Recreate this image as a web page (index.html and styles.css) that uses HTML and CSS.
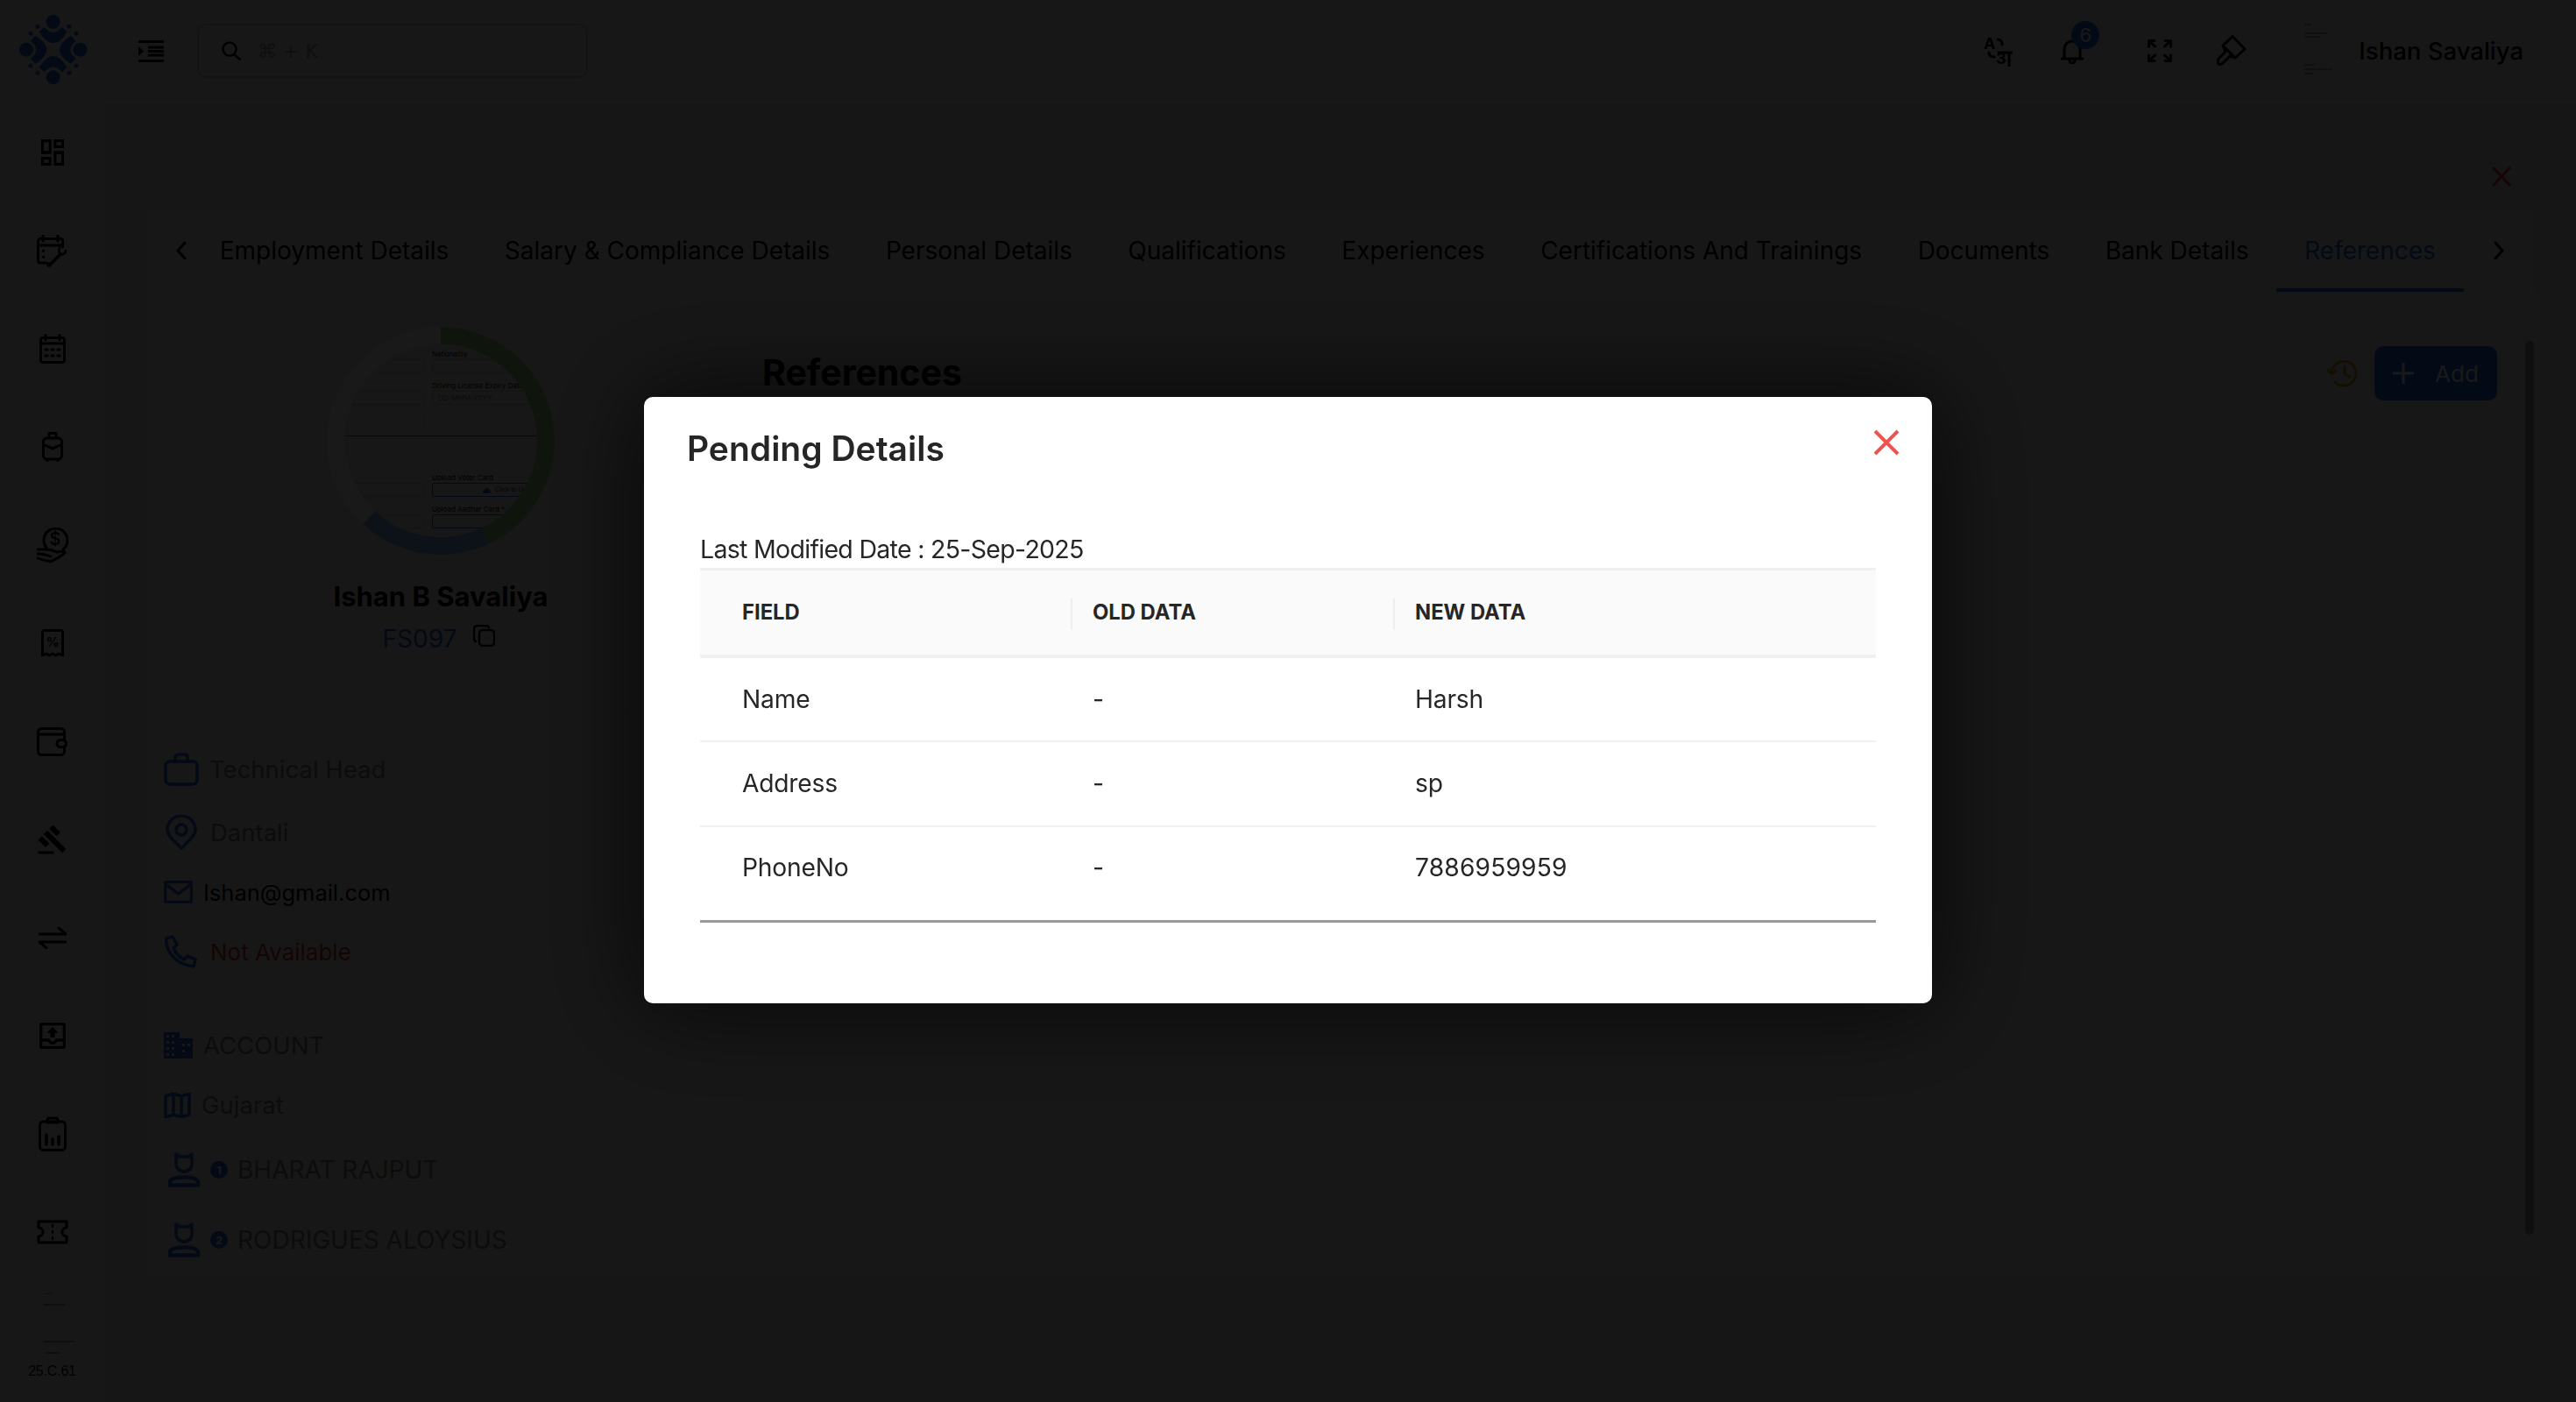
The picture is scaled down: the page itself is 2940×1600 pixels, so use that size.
FILE: index.html
```html
<!DOCTYPE html>
<html lang="en">
<head>
    <meta charset="UTF-8">
    <title>References</title>
    <link rel="stylesheet" href="styles.css">
</head>
<body>
<div class="app">
    <aside class="sidebar">
        <div class="logo">
            <svg width="100" height="100" viewBox="0 0 300 300" fill="#1f5fd0">
                <circle cx="152" cy="48" r="24"/><circle cx="152" cy="238" r="24"/>
                <circle cx="60" cy="143" r="24"/><circle cx="245" cy="143" r="24"/>
                <circle cx="99" cy="64" r="7.500"/><circle cx="207" cy="64" r="7.500"/>
                <circle cx="75" cy="88" r="7.500"/><circle cx="231" cy="88" r="7.500"/>
                <circle cx="75" cy="198" r="7.500"/><circle cx="231" cy="198" r="7.500"/>
                <circle cx="99" cy="223" r="7.500"/><circle cx="207" cy="223" r="7.500"/>
                <path d="M104 82 L122 66 Q152 102 182 66 L200 82 Q152 160 104 82 Z"/>
                <path transform="rotate(90 152 143)" d="M104 82 L122 66 Q152 102 182 66 L200 82 Q152 160 104 82 Z"/>
                <path transform="rotate(180 152 143)" d="M104 82 L122 66 Q152 102 182 66 L200 82 Q152 160 104 82 Z"/>
                <path transform="rotate(270 152 143)" d="M104 82 L122 66 Q152 102 182 66 L200 82 Q152 160 104 82 Z"/>
            </svg>
        </div>
        <nav class="side-nav">
            <a class="side-item"><svg width="26" height="30" viewBox="3 3 18 18" preserveAspectRatio="none" fill="#000"><path d="M19 5v2h-4V5h4M9 5v6H5V5h4m10 8v6h-4v-6h4M9 17v2H5v-2h4M21 3h-8v6h8V3zM11 3H3v10h8V3zm10 8h-8v10h8V11zm-10 4H3v6h8v-6z"/></svg></a>
            <a class="side-item"><svg class="line" width="35" height="37" viewBox="0 0 35 37"><path d="M11 32H4a2.500 2.500 0 0 1-2.500-2.500V7A2.500 2.500 0 0 1 4 4.500h23A2.500 2.500 0 0 1 29.500 7v7M1.500 12h28M7 1v6M24 1v6"/><path stroke-width="3" d="M7.500 18v.5M7.500 25v.5"/><path stroke-width="3.600" d="M16 33L27 22"/><path stroke-width="2.600" d="M26 15q-2 5 2 7 4 1 5-4"/><circle cx="14" cy="34" r="1.800" stroke-width="2"/></svg></a>
            <a class="side-item"><svg class="line" width="30" height="34" viewBox="0 0 30 34"><rect x="1.500" y="4.500" width="27" height="28" rx="2.500"/><path d="M1.500 11h27M7 1v6M23 1v6"/><path stroke-width="3.200" d="M7 18h2M14 18h2M21 18h2M7 25h2M14 25h2M21 25h2"/></svg></a>
            <a class="side-item"><svg class="line" width="24" height="34" viewBox="0 0 24 34"><rect x="1.500" y="7" width="21" height="24" rx="4"/><path d="M8 7V1.500h8V7M1.500 15q3 0 10.500 4 7-4 10.500-4M6 31v2M18 31v2"/></svg></a>
            <a class="side-item"><svg class="line" width="36" height="41" viewBox="0 0 36 41"><path d="M11 23A13.500 13.500 0 1 1 30 25"/><text class="dollar" x="21" y="20" text-anchor="middle">$</text><path stroke-width="2.800" d="M1 25h9q8 0 12 3l9-1q2 1 0 3-7 5-15 9-7-1-15-4M1 30q8 0 15 3"/></svg></a>
            <a class="side-item"><svg class="line" width="26" height="32" viewBox="0 0 26 32"><path d="M4 1.500h18a2.500 2.500 0 0 1 2.500 2.500v26l-4.500-2-3.500 2-3.500-2-3.500 2-3.500-2-4.500 2V4A2.500 2.500 0 0 1 4 1.500z"/><text class="percent" x="13" y="20" text-anchor="middle">%</text></svg></a>
            <a class="side-item"><svg class="line" width="35" height="33" viewBox="0 0 35 33"><rect x="1.500" y="1.500" width="30" height="30" rx="4"/><path d="M2 8h29"/><rect class="clasp" x="23" y="14.500" width="10.500" height="8" rx="4"/></svg></a>
            <a class="side-item"><svg width="36" height="36" viewBox="0 0 24 24" fill="#000"><path d="M1 21h12v2H1v-2zM5.245 8.070l2.830-2.827 14.140 14.142-2.828 2.828L5.245 8.070zM12.317 1l5.657 5.656-2.830 2.830-5.654-5.660L12.317 1zM3.825 9.485l5.657 5.657-2.828 2.828-5.657-5.657 2.828-2.828z"/></svg></a>
            <a class="side-item"><svg class="line" width="32" height="26" viewBox="0 0 32 26"><path d="M1 9h30l-8-7M31 18H1l8 7"/></svg></a>
            <a class="side-item"><svg width="30" height="30" viewBox="3 3 18 18" fill="#000"><path d="M19 3H5a2 2 0 0 0-2 2v14a2 2 0 0 0 2 2h14a2 2 0 0 0 2-2V5a2 2 0 0 0-2-2zm0 16H5v-3h3.560a4 4 0 0 0 6.880 0H19v3zm0-5h-4.990c0 1.100-.9 2-2.010 2s-2-.9-2-2H5V5h14v9zM8 10h2.500v3h3v-3H16l-4-4z"/></svg></a>
            <a class="side-item"><svg class="line" width="32" height="40" viewBox="0 0 32 40"><rect x="1.500" y="6" width="29" height="32.500" rx="4"/><path d="M10 6V4a2 2 0 0 1 2-2h8a2 2 0 0 1 2 2v3H10z"/><path stroke-width="3.500" d="M9 32V21M16 32v-6M23 32v-9"/></svg></a>
            <a class="side-item"><svg class="line" width="36" height="28" viewBox="0 0 36 28"><path d="M2 2h32v7a5 5 0 0 0 0 10v7H2v-7a5 5 0 0 0 0-10z"/><path stroke-width="2.500" d="M18 6v2M18 13v2M18 20v2"/></svg></a>
        </nav>
        <div class="side-footer">
            <svg class="tiny-marks" width="36" height="72" viewBox="0 0 36 72"><path d="M1 0h10M1 13h24M1 55h36M1 68h20"/></svg>
            <span class="version">25.C.61</span>
        </div>
    </aside>

    <div class="main">
        <header class="topbar">
            <div class="topbar-left">
                <svg width="29" height="25" viewBox="0 0 29 25" fill="#000"><path d="M0 0h29v3H0zM0 22h29v3H0zM11 6.500h18v3H11zM11 11h18v3H11zM11 15.500h18v3H11zM0 7l6 5.500L0 18z"/></svg>
                <div class="search">
                    <svg class="line-thin" width="23" height="22" viewBox="0 0 23 22"><circle cx="9" cy="9" r="7.500"/><path d="M14 15l7 6"/></svg>
                    <span>⌘ + K</span>
                </div>
            </div>
            <div class="topbar-right">
                <svg class="line icon-lang" width="34" height="36" viewBox="0 0 34 36"><text class="lang-a" x="1" y="16">A</text><path d="M17 5q5 0 5 6M7 20q0 5 6 5"/><text class="lang-b" x="15" y="33">3</text><path d="M30 20v15M18 20h15"/></svg>
                <div class="bell">
                    <svg class="line" width="26" height="30" viewBox="0 0 26 30"><path d="M1 24h24M4 24V13a9 9 0 0 1 18 0v11M10 26a3 3 0 0 0 6 0"/></svg>
                    <span class="badge">6</span>
                </div>
                <svg class="line icon-full" width="28" height="26" viewBox="0 0 28 26"><path d="M8 1.500H1.500V8M1.500 1.500l7 6.500M20 1.500h6.500V8M26.500 1.500l-7 6.500M8 24.500H1.500V18M1.500 24.500l7-6.500M20 24.500h6.500V18M26.500 24.500l-7-6.500"/></svg>
                <svg class="line icon-brush" width="34" height="36" viewBox="0 0 34 36"><path d="M18 1.500L32 16 21 26l-6-2-8 8q-4 3-5.500 0-1.500-3 1.500-6l7-7-3-7zM7 12l14 14"/></svg>
                <div class="user">
                    <div class="user-pic">
                        <svg class="tiny-marks" width="36" height="64" viewBox="0 0 36 64"><path d="M2 2h8M2 12h26M2 16h18M2 48h12M2 53h32M2 58h10"/></svg>
                    </div>
                    <span class="user-name">Ishan Savaliya</span>
                </div>
            </div>
        </header>

        <div class="content">
            <div class="page-close">
                <svg width="24" height="23" viewBox="0 0 24 23"><path d="M2 1l20 21M22 1L2 22"/></svg>
            </div>

            <div class="tabs">
                <svg class="line chev" width="13" height="22" viewBox="0 0 13 22"><path d="M11 2L3 11l8 9"/></svg>
                <a class="tab">Employment Details</a>
                <a class="tab">Salary &amp; Compliance Details</a>
                <a class="tab">Personal Details</a>
                <a class="tab">Qualifications</a>
                <a class="tab">Experiences</a>
                <a class="tab">Certifications And Trainings</a>
                <a class="tab">Documents</a>
                <a class="tab">Bank Details</a>
                <a class="tab active">References</a>
                <svg class="line chev chev-next" width="13" height="22" viewBox="0 0 13 22"><path d="M2 2l8 9-8 9"/></svg>
            </div>

            <div class="columns">
                <section class="profile">
                    <div class="avatar-ring">
                        <div class="avatar">
                            <div class="mini-form">
                                <div class="mini-col">
                                    <span class="mini-label"></span>
                                    <div class="mini-field"></div>
                                    <span class="mini-label"></span>
                                    <div class="mini-field"></div>
                                    <div class="mini-stub"></div>
                                </div>
                                <div class="mini-col">
                                    <span class="mini-label">Nationality</span>
                                    <div class="mini-field"></div>
                                    <span class="mini-label">Driving License Expiry Date</span>
                                    <div class="mini-field mini-hint">DD-MMM-YYYY</div>
                                </div>
                            </div>
                            <div class="mini-rule"></div>
                            <div class="mini-form">
                                <div class="mini-col">
                                    <span class="mini-label"></span>
                                    <div class="mini-field"></div>
                                    <span class="mini-label"></span>
                                    <div class="mini-field"></div>
                                </div>
                                <div class="mini-col">
                                    <span class="mini-label">Upload Voter Card</span>
                                    <div class="mini-field mini-upload">
                                        <svg width="9" height="7" viewBox="0 0 9 7" fill="#1f5fd0"><path d="M2 7a2 2 0 0 1-.3-4A3 3 0 0 1 7 2.500 2.300 2.300 0 0 1 7 7z"/></svg>
                                        <span>Click to Upload</span>
                                    </div>
                                    <span class="mini-label">Upload Aadhar Card <b>*</b></span>
                                    <div class="mini-field mini-upload"></div>
                                </div>
                            </div>
                        </div>
                    </div>
                    <h2 class="emp-name">Ishan B Savaliya</h2>
                    <div class="emp-code">
                        <span>FS097</span>
                        <svg class="line-thin" width="25" height="25" viewBox="0 0 25 25"><rect x="7" y="6" width="17" height="18" rx="4"/><path d="M3 19q-2-.5-2-3V5q0-4 4-4h10q2 0 3 2"/></svg>
                    </div>

                    <div class="info-block first">
                        <div class="info-row row-role">
                            <svg class="blue-line" width="40" height="38" viewBox="0 0 40 38"><rect x="2" y="10" width="36" height="26" rx="5"/><path d="M13 10V6q0-4 4-4h6q4 0 4 4v4"/></svg>
                            <span class="muted">Technical Head</span>
                        </div>
                        <div class="info-row row-pin">
                            <svg class="blue-line" width="36" height="40" viewBox="0 0 36 40"><path d="M18 38C8 28 2 23 2 17a16 16 0 0 1 32 0c0 6-6 11-16 21z"/><circle cx="18" cy="17" r="6"/></svg>
                            <span class="muted">Dantali</span>
                        </div>
                        <div class="info-row">
                            <svg class="blue-line" width="33" height="26" viewBox="0 0 33 26"><rect x="1.500" y="1.500" width="30" height="23" rx="2"/><path d="M2 4l14.500 11L31 4"/></svg>
                            <span class="email">Ishan@gmail.com</span>
                        </div>
                        <div class="info-row row-phone">
                            <svg class="blue-line" width="38" height="38" viewBox="0 0 38 38"><path d="M10 2L3 4C1 12 8 33 34 36l2-8-9-4-4 4C17 25 13 20 11 15l4-4z"/></svg>
                            <span class="not-available">Not Available</span>
                        </div>
                    </div>

                    <div class="info-block">
                        <div class="info-row">
                            <svg width="33" height="30" viewBox="0 0 33 30" fill="#1f5fd0"><path d="M0 0h18v7h15v23H0zM3 3v3h3V3zm6 0v3h3V3zM3 10v3h3v-3zm6 0v3h3v-3zM3 17v3h3v-3zm6 0v3h3v-3zM3 24v3h3v-3zm6 0v3h3v-3zM21 13v3h3v-3zm0 7v3h3v-3zM27 13v3h3v-3z" fill-rule="evenodd"/></svg>
                            <span class="muted">ACCOUNT</span>
                        </div>
                        <div class="info-row row-state">
                            <svg class="blue-line" width="31" height="29" viewBox="0 0 31 29"><path d="M2 4l9-3 9 3 9-3v24l-9 3-9-3-9 3zM11 1v24M20 4v24"/></svg>
                            <span class="muted">Gujarat</span>
                        </div>
                        <div class="info-row manager">
                            <svg width="38" height="40" viewBox="0 0 38 40" class="blue-line"><path d="M10 2l4 3h10l4-3v11a9 9 0 0 1-18 0z"/><path stroke-width="4.500" d="M3 37.500v-3q0-6 16-6t16 6v3z"/></svg>
                            <span class="num">1</span>
                            <span class="muted">BHARAT RAJPUT</span>
                        </div>
                        <div class="info-row manager">
                            <svg width="38" height="40" viewBox="0 0 38 40" class="blue-line"><path d="M10 2l4 3h10l4-3v11a9 9 0 0 1-18 0z"/><path stroke-width="4.500" d="M3 37.500v-3q0-6 16-6t16 6v3z"/></svg>
                            <span class="num">2</span>
                            <span class="muted">RODRIGUES ALOYSIUS</span>
                        </div>
                    </div>
                </section>

                <section class="refs">
                    <h2>References</h2>
                    <div class="refs-actions">
                        <svg class="history" width="36" height="32" viewBox="0 0 36 32"><path d="M5 16a14 14 0 1 1 4 10"/><path d="M1 12l4 5 5-4M20 8v9l6 3"/></svg>
                        <button class="add-btn"><svg width="24" height="24" viewBox="0 0 24 24"><path d="M12 0v24M0 12h24"/></svg>Add</button>
                    </div>
                </section>
                <div class="scroll-thumb"></div>
            </div>
        </div>
    </div>
</div>

<div class="overlay">
    <div class="modal">
        <h3 class="modal-title">Pending Details</h3>
        <svg class="modal-close" width="30" height="30" viewBox="0 0 30 30"><path d="M2 2l26 26M28 2L2 28"/></svg>
        <p class="modified">Last Modified Date : 25-Sep-2025</p>
        <div class="table-wrap">
            <table>
                <thead>
                    <tr><th class="col-field">Field</th><th class="col-old">Old Data</th><th>New Data</th></tr>
                </thead>
                <tbody>
                    <tr><td>Name</td><td>-</td><td>Harsh</td></tr>
                    <tr><td>Address</td><td>-</td><td>sp</td></tr>
                    <tr><td>PhoneNo</td><td>-</td><td class="digits">7886959959</td></tr>
                </tbody>
            </table>
        </div>
    </div>
</div>
</body>
</html>
```
FILE: styles.css
```css
* { box-sizing: border-box; }
html, body { margin: 0; height: 100%; overflow: hidden; }
body { background: #dcdcdc; font-family: "Inter", "Noto Sans", sans-serif; color: #000; }
h2, h3, p { margin: 0; }
svg { display: block; flex: none; }
.line { fill: none; stroke: #000; stroke-width: 3; stroke-linecap: round; stroke-linejoin: round; }
.line-thin { fill: none; stroke: #000; stroke-width: 2.4; stroke-linecap: round; stroke-linejoin: round; }
.blue-line { fill: none; stroke: #1f5fd0; stroke-width: 3.600; stroke-linecap: round; stroke-linejoin: round; }
.line text { stroke: none; fill: #000; }
.clasp { fill: #e6e6e6; }
.dollar { font-size: 20px; font-weight: 500; }
.percent { font-size: 15px; font-weight: 700; }
.lang-a { font-size: 18px; font-weight: 700; }
.lang-b { font-size: 18px; font-weight: 700; }

.app { display: flex; height: 1600px; }

/* sidebar */
.sidebar { width: 120px; flex: none; display: flex; flex-direction: column; background: #e6e6e6; border-right: 1px solid #f2f2f2; }
.logo { height: 118px; display: flex; align-items: center; justify-content: center; }
.side-nav { height: 1332px; overflow: hidden; border-bottom: 2px solid #f2f2f2; }
.side-item { height: 112px; display: flex; align-items: center; justify-content: center; }
.side-footer { flex: 1; display: flex; flex-direction: column; align-items: center; padding-top: 26px; }
.tiny-marks { fill: none; stroke: #555; stroke-width: 1; margin-left: 14px; }
.version { font-family: "Liberation Sans", sans-serif; font-size: 16px; margin-top: 8px; color: #111; letter-spacing: -0.2px; }

/* top bar */
.main { flex: 1; min-width: 0; display: flex; flex-direction: column; }
.topbar { height: 118px; flex: none; display: flex; align-items: center; justify-content: space-between; padding: 0 60px 0 38px; background: #e6e6e6; border-bottom: 2px solid #f2f2f2; }
.topbar-left { display: flex; align-items: center; gap: 38px; }
.search { width: 446px; height: 62px; border: 2px solid #c4c4c4; border-radius: 10px; display: flex; align-items: center; gap: 18px; padding: 0 26px; color: #999; font-size: 24px; }
.search span { font-family: "DejaVu Sans", sans-serif; font-size: 22px; }
.topbar-right { display: flex; align-items: center; }
.icon-lang { margin-right: 55px; }
.bell { position: relative; margin-right: 73px; }
.badge { position: absolute; left: 12px; top: -19px; width: 32px; height: 32px; border-radius: 50%; background: #1f5fd0; color: #fff; font-size: 22px; display: flex; align-items: center; justify-content: center; }
.icon-brush { margin-left: 51px; margin-right: 43px; }
.user { display: flex; align-items: center; gap: 21px; }
.user-pic { width: 64px; height: 64px; border-radius: 50%; background: #ececec; display: flex; justify-content: center; }
.user-name { font-size: 27.5px; font-weight: 500; }

/* page body */
.content { flex: 1; position: relative; padding: 120px 48px 0 48px; }
.page-close { position: absolute; right: 73px; top: 72px; }
.page-close svg { fill: none; stroke: #e53935; stroke-width: 3; }
.tabs { height: 95px; display: flex; align-items: center; background: #ebebeb; padding-left: 32px; box-shadow: 0 1px 3px rgba(0,0,0,.08); }
.chev { margin-right: 6px; }
.tab { height: 100%; display: flex; align-items: center; padding: 0 31.75px; font-size: 28px; white-space: nowrap; }
.tab.active { color: #1f5fd0; box-shadow: inset 0 -4px 0 #1f5fd0; }
.chev-next { margin-left: 34px; }
.columns { display: flex; position: relative; height: 1125px; }

.profile { width: 640px; flex: none; background: #ebebeb; padding-top: 40px; }
.avatar-ring { width: 260px; height: 260px; border-radius: 50%; padding: 20px; margin-left: 205px; background: conic-gradient(#9cd878 0 155deg, #78b8f0 155deg 223deg, #fff 223deg 360deg); }
.avatar { width: 220px; height: 220px; border-radius: 50%; background: #ebebeb; overflow: hidden; padding-top: 6px; }
.mini-form { display: grid; grid-template-columns: 91px 120px; gap: 9px; }
.mini-col { min-width: 0; }
.mini-label { display: block; height: 10px; font-size: 8px; line-height: 10px; white-space: nowrap; color: #000; }
.mini-label b { color: #c00; }
.mini-field { height: 16px; border: 1px solid #c4c4c4; border-radius: 2px; margin: 1px 0 9px; font-size: 8px; line-height: 14px; padding-left: 6px; color: #777; }
.mini-upload { border-color: #1f5fd0; padding-left: 57px; color: #333; display: flex; align-items: center; gap: 5px; font-size: 7px; white-space: nowrap; }
.mini-stub { height: 14px; margin-top: 11px; border-right: 1px solid #c4c4c4; }
.mini-rule { height: 1px; background: #666; margin: 10px 0 42px; }

.emp-name { font-size: 31px; font-weight: 700; text-align: center; margin-top: 28px; width: 670px; line-height: 40px; }
.emp-code { display: flex; justify-content: center; align-items: center; gap: 19px; width: 666px; margin-top: 8px; color: #1f5fd0; font-size: 28px; line-height: 40px; }
.emp-code svg { margin-top: -8px; }
.info-block { border-top: 2px solid #e0e0e0; margin-left: 14px; width: 1000px; padding: 44px 0 17px; }
.info-block.first { margin-top: 59px; padding-top: 46px; }
.info-row { display: flex; align-items: center; gap: 12px; height: 44px; margin-bottom: 24px; padding-left: 5px; font-size: 27.5px; }
.row-role { margin-bottom: 28px; }
.row-pin { gap: 15px; padding-left: 7px; }
.row-phone { gap: 15px; margin-bottom: 0; }
.row-state { margin-bottom: 30px; }
.muted { color: #777; }
.email { font-size: 25.500px; color: #000; }
.not-available { font-size: 26px; color: #d32f2f; }
.manager { gap: 11px; margin-bottom: 36px; padding-left: 9px; font-size: 28px; }
.num { width: 20px; height: 20px; border-radius: 50%; background: #1f5fd0; color: #fff; font-size: 12px; font-weight: 700; display: flex; align-items: center; justify-content: center; }

.refs { flex: 1; background: #ebebeb; padding: 62px 0 0 62px; display: flex; justify-content: space-between; align-items: flex-start; }
.refs h2 { font-size: 41px; font-weight: 700; line-height: 60px; }
.refs-actions { display: flex; align-items: center; gap: 18px; margin-right: 50px; }
.history { fill: none; stroke: #c99a12; stroke-width: 3; stroke-linecap: round; stroke-linejoin: round; }
.add-btn { width: 140px; height: 62px; border: 0; border-radius: 10px; background: #1f5fd0; color: #fff; font: 26px "Inter", sans-serif; display: flex; align-items: center; justify-content: center; gap: 24px; }
.add-btn svg { fill: none; stroke: #fff; stroke-width: 3; }
.scroll-thumb { width: 10px; height: 1020px; margin-top: 56px; background: #999; border-radius: 5px; flex: none; margin-left: -18px; }

/* modal */
.overlay { position: fixed; inset: 0; background: rgba(0,0,0,.9); display: flex; align-items: center; justify-content: center; padding-bottom: 2px; }
.modal { position: relative; width: 1470px; height: 692px; background: #fff; border-radius: 10px; padding: 31px 64px 0 64px; box-shadow: 0 0 120px 20px rgba(0,0,0,.6); color: #262626; }
.modal-title { font-size: 39px; line-height: 56px; font-weight: 600; margin-left: -15px; }
.modal-close { position: absolute; right: 37px; top: 37px; fill: none; stroke: #ef5350; stroke-width: 4; }
.modified { font-size: 28.500px; line-height: 40px; margin-top: 67px; letter-spacing: -0.7px; }
.table-wrap { border-bottom: 3px solid #999; height: 405px; margin-top: 1px; }
table { width: 100%; border-collapse: collapse; table-layout: fixed; }
th { position: relative; height: 99px; background: #fafafa; border-top: 3px solid #f0f0f0; border-bottom: 4px solid #f0f0f0; font-size: 23.800px; font-weight: 700; text-transform: uppercase; text-align: left; padding: 0 25px; }
th + th::before { content: ""; position: absolute; left: 0; top: 32px; width: 2px; height: 36px; background: #efefef; }
td { height: 97px; border-bottom: 2px solid #f0f0f0; font-size: 28.200px; letter-spacing: -0.2px; padding: 0 25px; }
tbody tr:last-child td { border-bottom: 0; height: 93px; }
th:first-child, td:first-child { padding-left: 48px; }
td.digits { letter-spacing: 0.15px; }
.col-field { width: 423px; }
.col-old { width: 368px; }
```
